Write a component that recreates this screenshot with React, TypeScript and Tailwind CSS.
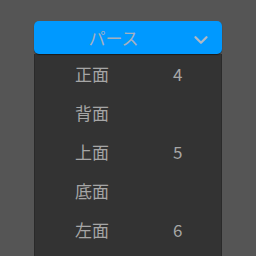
import { ChevronDown } from "lucide-react";

const items = [
  { label: "正面", num: "4" },
  { label: "背面", num: "" },
  { label: "上面", num: "5" },
  { label: "底面", num: "" },
  { label: "左面", num: "6" },
];

export default function App() {
  return (
    <div
      className="w-[256px] h-[256px] overflow-hidden bg-[#555555] pt-[21px] pl-[34px]"
      style={{ fontFamily: '"Noto Sans CJK JP", "Noto Sans", sans-serif' }}
    >
      <div className="w-[188px]">
        <div className="relative h-[33px] rounded-[5px] bg-[#0099ff] flex items-center justify-center text-[17px] text-[#a4b0c0] shadow-[0_1px_1px_rgba(0,0,0,0.5)]">
          <span className="-ml-[29px]">パース</span>
          <ChevronDown
            className="absolute right-[10px] top-[8px] text-[#b0b8c4]"
            size={22}
            strokeWidth={2.5}
          />
        </div>
        <div className="h-[202px] bg-[#333333] border-x border-[#2a2a2a]">
          {items.map((it) => (
            <div key={it.label} className="h-[39px] flex items-center text-[17px] text-[#a6a6a6]">
              <span className="ml-[40px] w-[98px]">{it.label}</span>
              <span>{it.num}</span>
            </div>
          ))}
        </div>
      </div>
    </div>
  );
}
